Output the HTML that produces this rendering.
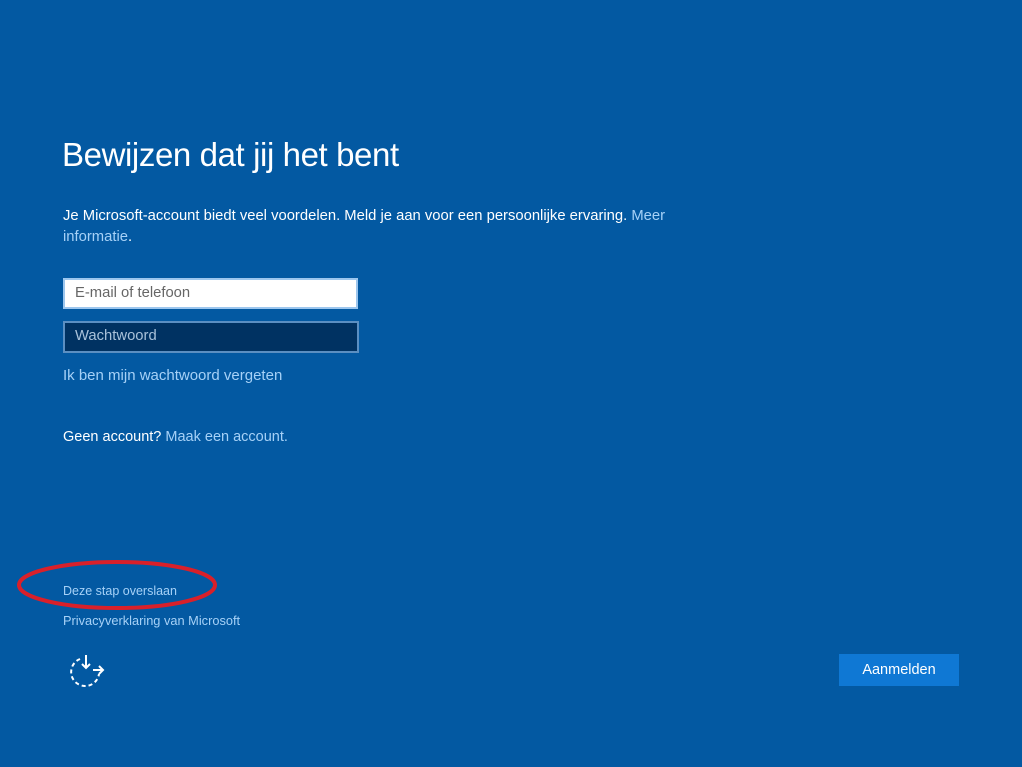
<!DOCTYPE html>
<html><head><meta charset="utf-8"><style>
body{margin:0;width:1022px;height:767px;background:#0359a2;font-family:"Liberation Sans",sans-serif;position:relative;overflow:hidden;color:#fff}
.a{position:absolute;white-space:nowrap}
.l{color:#a6d1f7}
</style></head><body>
<div class="a" style="left:62px;top:136px;font-size:33px;font-weight:300;letter-spacing:-0.4px">Bewijzen dat jij het bent</div>
<div class="a" style="left:63px;top:206px;font-size:14.8px;line-height:21px">Je Microsoft-account biedt veel voordelen. Meld je aan voor een persoonlijke ervaring. <span class="l">Meer</span><br><span class="l">informatie</span>.</div>
<div class="a" style="left:63px;top:278px;width:291px;height:27px;background:#fff;border:2px solid #9cc6ee;box-sizing:content-box;"></div>
<div class="a" style="left:75px;top:285px;font-size:14.8px;color:#666">E-mail of telefoon</div>
<div class="a" style="left:63px;top:321px;width:292px;height:28px;background:#003262;border:2px solid #5b8fc2"></div>
<div class="a" style="left:75px;top:328px;font-size:14.8px;color:#a9c2da">Wachtwoord</div>
<div class="a l" style="left:63px;top:367px;font-size:15px">Ik ben mijn wachtwoord vergeten</div>
<div class="a" style="left:63px;top:429px;font-size:14.5px">Geen account? <span class="l">Maak een account.</span></div>
<svg class="a" style="left:16px;top:558px" width="204" height="54"><ellipse cx="101" cy="27" rx="98" ry="23" fill="none" stroke="#d9202a" stroke-width="4"/></svg>
<div class="a l" style="left:63px;top:584px;font-size:12.5px">Deze stap overslaan</div>
<div class="a l" style="left:63px;top:613px;font-size:12.8px">Privacyverklaring van Microsoft</div>
<svg class="a" style="left:68px;top:654px" width="40" height="34" fill="none" stroke="#fff" stroke-width="2">
<path d="M12 5 A14 14 0 1 0 31 20" stroke-dasharray="4 3"/>
<path d="M18 1 V14 M14 10 L18 14 L22 10 M25 16 H35 M31 12 L35 16 L31 20"/>
</svg>
<div class="a" style="left:839px;top:654px;width:120px;height:32px;background:#0f78d4;font-size:14.5px;text-align:center;line-height:33px">Aanmelden</div>
</body></html>
